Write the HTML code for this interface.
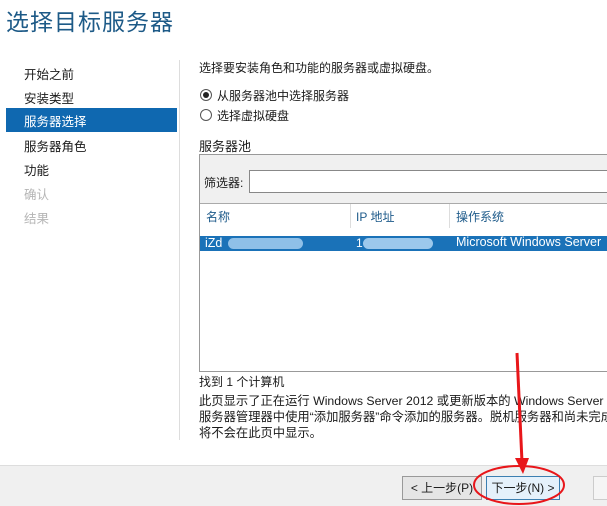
<!DOCTYPE html>
<html><head><meta charset="utf-8"><style>
body{margin:0;width:607px;height:505px;overflow:hidden;background:#fff;font-family:"Liberation Sans","Noto Sans CJK SC",sans-serif;font-size:12px;color:#1a1a1a;position:relative}
.a{position:absolute;white-space:nowrap}
.nav{left:24px;font-size:12.5px}
</style></head><body>
<div class="a" style="left:6px;top:3px;font-size:23px;color:#1d5a87;letter-spacing:1px">选择目标服务器</div>
<div class="a" style="left:6px;top:108px;width:171px;height:24px;background:#0f68b0"></div>
<div class="a nav" style="top:64px">开始之前</div>
<div class="a nav" style="top:88px">安装类型</div>
<div class="a nav" style="top:111px;color:#fff">服务器选择</div>
<div class="a nav" style="top:136px">服务器角色</div>
<div class="a nav" style="top:160px">功能</div>
<div class="a nav" style="top:184px;color:#b5b5b5">确认</div>
<div class="a nav" style="top:208px;color:#b5b5b5">结果</div>
<div class="a" style="left:179px;top:60px;width:1px;height:380px;background:#ddd"></div>
<div class="a" style="left:199px;top:59px">选择要安装角色和功能的服务器或虚拟硬盘。</div>
<div class="a" style="left:200px;top:89px;width:10px;height:10px;border:1px solid #555;border-radius:50%"></div>
<div class="a" style="left:203px;top:92px;width:6px;height:6px;background:#222;border-radius:50%"></div>
<div class="a" style="left:217px;top:87px">从服务器池中选择服务器</div>
<div class="a" style="left:200px;top:109px;width:10px;height:10px;border:1px solid #555;border-radius:50%"></div>
<div class="a" style="left:217px;top:107px">选择虚拟硬盘</div>
<div class="a" style="left:199px;top:136px;font-size:13px">服务器池</div>
<div class="a" style="left:199px;top:154px;width:420px;height:216px;border:1px solid #999;background:#fff"></div>
<div class="a" style="left:200px;top:155px;width:420px;height:48px;background:#f0f0f0;border-bottom:1px solid #aaa"></div>
<div class="a" style="left:204px;top:174px">筛选器:</div>
<div class="a" style="left:249px;top:170px;width:370px;height:21px;border:1px solid #888;background:#fff"></div>
<div class="a" style="left:206px;top:208px;color:#1d5a8a">名称</div>
<div class="a" style="left:350px;top:204px;width:1px;height:24px;background:#ddd"></div>
<div class="a" style="left:356px;top:208px;color:#1d5a8a">IP 地址</div>
<div class="a" style="left:449px;top:204px;width:1px;height:24px;background:#ddd"></div>
<div class="a" style="left:456px;top:208px;color:#1d5a8a">操作系统</div>
<div class="a" style="left:200px;top:236px;width:410px;height:15px;background:#1a72b8"></div>
<div class="a" style="left:205px;top:236px;color:#fff;font-size:12.5px">iZd</div>
<div class="a" style="left:228px;top:238px;width:75px;height:11px;background:#8fc0e8;border-radius:6px"></div>
<div class="a" style="left:356px;top:236px;color:#fff">1</div>
<div class="a" style="left:363px;top:238px;width:70px;height:11px;background:#9cc8ec;border-radius:6px"></div>
<div class="a" style="left:456px;top:235px;color:#fff;font-size:12.5px">Microsoft Windows Server</div>
<div class="a" style="left:199px;top:373px">找到 1 个计算机</div>
<div class="a" style="left:199px;top:393px;line-height:16px;font-size:12.3px">此页显示了正在运行 Windows Server 2012 或更新版本的 Windows Server<br>服务器管理器中使用“添加服务器”命令添加的服务器。脱机服务器和尚未完成数<br>将不会在此页中显示。</div>
<div class="a" style="left:0;top:465px;width:607px;height:40px;background:#f0f0f0;border-top:1px solid #ddd"></div>
<div class="a" style="left:402px;top:476px;width:78px;height:22px;border:1px solid #999;background:#e5e5e5;text-align:center;line-height:22px">&lt; 上一步(P)</div>
<div class="a" style="left:486px;top:476px;width:72px;height:22px;border:1px solid #3c7fb1;background:#e5f1fb;text-align:center;line-height:22px">下一步(N) &gt;</div>
<div class="a" style="left:593px;top:476px;width:20px;height:22px;border:1px solid #ccc;background:#f5f5f5"></div>
<svg class="a" style="left:0;top:0" width="607" height="505">
<line x1="517" y1="353" x2="522" y2="462" stroke="#e8161a" stroke-width="3"/>
<polygon points="515,458 529,458 523,474" fill="#e8161a"/>
<ellipse cx="519" cy="485" rx="45" ry="19" fill="none" stroke="#e8161a" stroke-width="2"/>
</svg>
</body></html>
